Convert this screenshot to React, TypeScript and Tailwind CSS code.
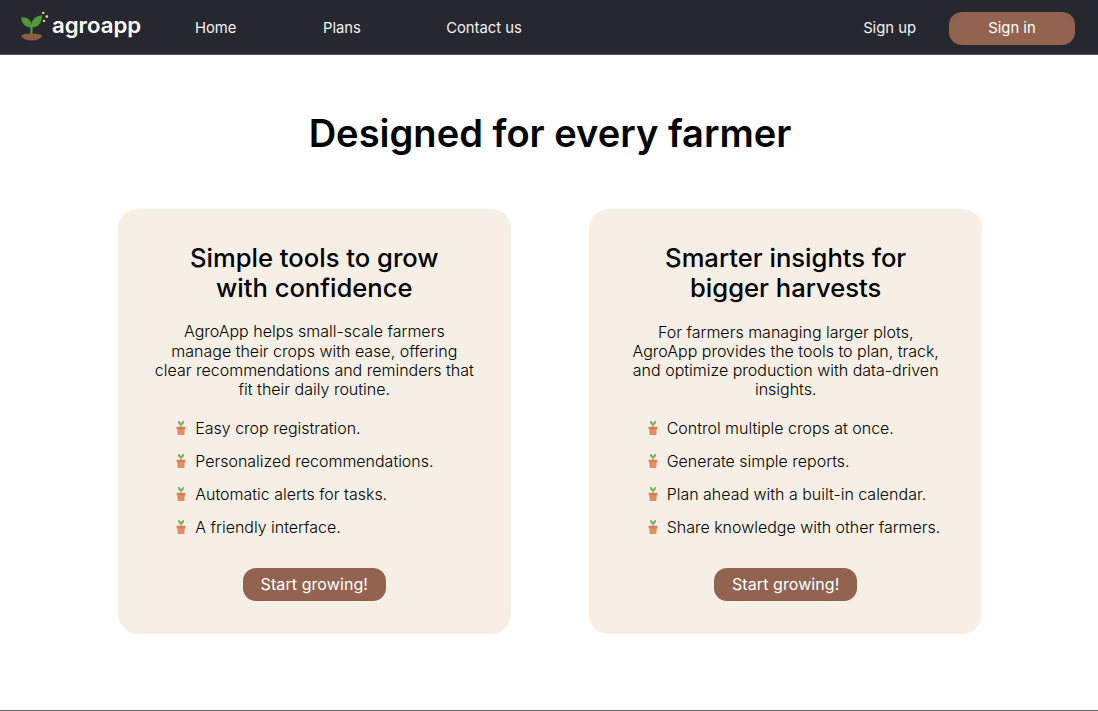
import React from "react";

function Logo() {
  return (
    <svg className="h-[36px] w-[36px] shrink-0" viewBox="0 0 36 36" aria-hidden="true">
      <path d="M15.4 25.5V16" stroke="#4f9a3a" strokeWidth="2.2" fill="none" />
      <path d="M5.2 7.5C9.5 6.5 16 9.2 16 17.4C9.6 17.7 5.6 13.8 5.2 7.5Z" fill="#4f9a3a" />
      <path d="M15.2 17.4C14.6 10.4 18.8 5.7 25.9 5.2C26.3 12.2 22.4 17.6 15.2 17.4Z" fill="#4f9a3a" />
      <path d="M5.2 25.6C7.5 22.8 23.4 22.8 26 25.6C24.2 32.2 7.2 32.2 5.2 25.6Z" fill="#8a6040" />
      <rect x="26" y="1.7" width="2.4" height="2.4" rx=".8" fill="#f3cc69" />
      <rect x="29.5" y="5.2" width="2.6" height="2.6" rx=".8" fill="#f3cc69" />
      <rect x="26.8" y="9.7" width="2.4" height="2.4" rx=".8" fill="#f3cc69" />
    </svg>
  );
}

function Pot() {
  return (
    <svg className="mb-[2px] h-[16px] w-[10px] shrink-0" viewBox="0 0 10 16" aria-hidden="true">
      <path d="M5 7V3.5" stroke="#6fa861" strokeWidth="1.1" />
      <path d="M5 4.9C2.8 5.2 1.9 3.4 2 1C4 1 5 2.4 5 4.9Z" fill="#6fae63" />
      <path d="M5 4.9C7.2 5.2 8.1 3.4 8 1C6 1 5 2.4 5 4.9Z" fill="#6fae63" />
      <path d="M1.2 8H8.8L8.3 15H1.7Z" fill="#e58c62" />
      <rect x=".6" y="6.7" width="8.8" height="2.5" rx=".3" fill="#d97f58" />
    </svg>
  );
}

type Plan = { title: string[]; text: string[]; items: string[]; shift: string };

const plans: Plan[] = [
  {
    title: ["Simple tools to grow", "with confidence"],
    text: [
      "AgroApp helps small-scale farmers",
      "manage their crops with ease, offering",
      "clear recommendations and reminders that",
      "fit their daily routine.",
    ],
    items: ["Easy crop registration.", "Personalized recommendations.", "Automatic alerts for tasks.", "A friendly interface."],
    shift: "pt-[19.3px]",
  },
  {
    title: ["Smarter insights for", "bigger harvests"],
    text: [
      "For farmers managing larger plots,",
      "AgroApp provides the tools to plan, track,",
      "and optimize production with data-driven",
      "insights.",
    ],
    items: ["Control multiple crops at once.", "Generate simple reports.", "Plan ahead with a built-in calendar.", "Share knowledge with other farmers."],
    shift: "pt-[19.5px]",
  },
];

function Card({ plan }: { plan: Plan }) {
  return (
    <section className="flex h-[425px] w-[393px] flex-col items-center rounded-[20px] bg-[#f6efe5] pt-[34px]">
      <h2 className="text-center text-[25.6px] leading-[30px] font-medium whitespace-nowrap">
        {plan.title.map((line) => (
          <span key={line} className="block">{line}</span>
        ))}
      </h2>
      <div className={`flex h-[265px] w-full flex-col ${plan.shift}`}>
        <p className="text-center text-[16px] leading-[19.2px] font-light whitespace-nowrap">
          {plan.text.map((line) => (
            <span key={line} className="block">{line}</span>
          ))}
        </p>
        <ul className="mt-[13.2px] pl-[58.5px] text-[15.97px] font-light whitespace-nowrap">
          {plan.items.map((item) => (
            <li key={item} className="flex h-[33px] items-center gap-[9px]">
              <Pot />
              {item}
            </li>
          ))}
        </ul>
      </div>
      <button className="flex h-[33px] w-[143px] items-center justify-center rounded-[13px] bg-[#92644f] pb-[2px] text-[16px] tracking-[0.08px] whitespace-nowrap text-white">
        Start growing!
      </button>
    </section>
  );
}

export default function App() {
  return (
    <div className="flex h-[711px] w-[1098px] flex-col overflow-hidden border-b border-[#666] bg-white font-['Inter',sans-serif] text-black">
      <header className="flex h-[55px] shrink-0 items-center border-b border-[#55555d] bg-[#272730] pt-[2px] text-[14.8px] text-[#f4f4f4]">
        <a className="flex w-[195px] items-center pl-[16px]">
          <Logo />
          <span className="pb-[6px] text-[22.2px] leading-[28px] font-semibold text-white">agroapp</span>
        </a>
        <nav className="flex flex-1 whitespace-nowrap">
          <a className="w-[128px]">Home</a>
          <a className="w-[123.2px]">Plans</a>
          <a>Contact us</a>
        </nav>
        <a className="mr-[33px] whitespace-nowrap">Sign up</a>
        <button className="mr-[23px] flex h-[33px] w-[126px] items-center justify-center rounded-[13px] bg-[#92644f] text-white">
          Sign in
        </button>
      </header>
      <main>
        <h1 className="mt-[54px] pl-[2px] text-center text-[38.1px] leading-[48px] font-semibold">Designed for every farmer</h1>
        <div className="mt-[52px] flex justify-center gap-[78.4px] pl-[2px]">
          {plans.map((plan) => (
            <Card key={plan.title[0]} plan={plan} />
          ))}
        </div>
      </main>
    </div>
  );
}
